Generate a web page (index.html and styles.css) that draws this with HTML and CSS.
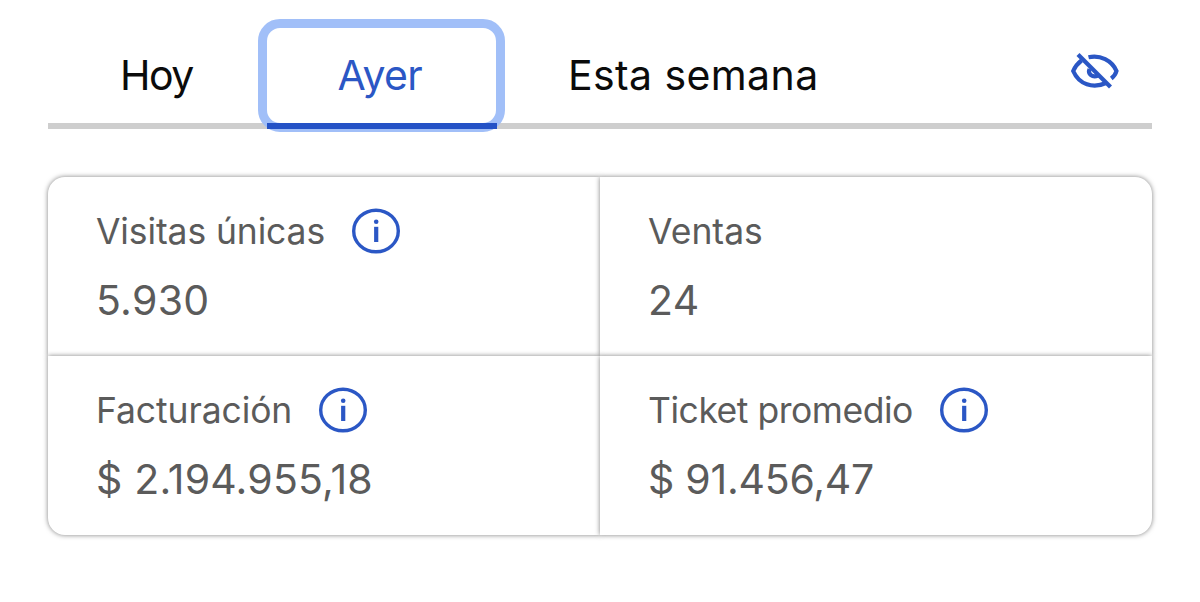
FILE: index.html
```html
<!DOCTYPE html>
<html lang="es">
<head>
<meta charset="utf-8">
<title>Resumen</title>
<link rel="stylesheet" href="styles.css">
</head>
<body>
<svg width="0" height="0" class="defs">
  <symbol id="info" viewBox="0 0 48 46">
    <ellipse cx="24" cy="23" rx="22.3" ry="20.8" fill="none" stroke="currentColor" stroke-width="3.4"/>
    <circle cx="24.2" cy="13.8" r="2.3" fill="currentColor"/>
    <path d="M24.2 18.8V34" stroke="currentColor" stroke-width="4.2"/>
  </symbol>
</svg>
<main class="page">
  <nav class="tabs">
    <a class="tab tab-today"><span class="t-today">Hoy</span></a>
    <a class="tab tab-active"><span class="t-yesterday">Ayer</span></a>
    <a class="tab tab-week"><span class="t-week">Esta semana</span></a>
    <svg class="eye" viewBox="0 0 50 38" fill="none" stroke="currentColor" stroke-width="4.2">
      <path d="M18.500 5.300C30 2.500 42 8.500 46.500 19C45.700 22 43.800 24.500 41.300 26.500"/>
      <path d="M11.500 8.500C7.500 11.500 5 15 3.200 19C9 32.500 23 37 36 31"/>
      <path d="M19.500 17C17.500 22 22.500 26 28 23.500"/>
      <path d="M8 2.500L40.500 35"/>
    </svg>
  </nav>
  <section class="cards">
    <article class="card card-tl">
      <div class="label"><span class="l-visits">Visitas únicas</span><svg class="info"><use href="#info"/></svg></div>
      <div class="value v-visits">5.930</div>
    </article>
    <article class="card card-tr">
      <div class="label"><span class="l-sales">Ventas</span></div>
      <div class="value v-sales">24</div>
    </article>
    <article class="card card-bl">
      <div class="label"><span class="l-billing">Facturación</span><svg class="info"><use href="#info"/></svg></div>
      <div class="value v-billing">$ 2.194.955,18</div>
    </article>
    <article class="card card-br">
      <div class="label"><span class="l-ticket">Ticket promedio</span><svg class="info"><use href="#info"/></svg></div>
      <div class="value v-ticket">$ 91.456,47</div>
    </article>
  </section>
</main>
</body>
</html>
```
FILE: styles.css
```css
*, *::before, *::after { box-sizing: border-box; }
body { margin: 0; background: #fff; font-family: Inter, "Liberation Sans", sans-serif; color: #5b5b5b; }
.defs { display: block; }
.page { min-height: 602px; padding: 27px 48px 0; }
.tabs { display: flex; height: 102px; border-bottom: 6px solid #cecece; color: #0b0b0b; font-size: 41px; line-height: 50px; }
.tab { padding: 23px 0 0 72px; height: 102px; white-space: nowrap; }
.tab-today { width: 218.5px; }
.tab-active { width: 230.5px; position: relative; color: #2b57c5; }
.tab-active::before { content: ""; position: absolute; left: -8.5px; top: -8px; width: 247px; height: 113px; border: 9px solid #a1bff8; border-radius: 22px; }
.tab-active::after { content: ""; position: absolute; left: 0; right: 0; bottom: 0; height: 6px; background: #2452c6; }
.t-today { letter-spacing: -1.5px; }
.t-yesterday { letter-spacing: -.6px; margin-left: -1px; }
.t-week { letter-spacing: .4px; margin-left: -1px; }
.eye { width: 50px; height: 38px; margin: 25px 32px 0 auto; color: #2b57c5; }
.cards { display: grid; grid-template-columns: 552px 552px; grid-template-rows: 179px 179px; margin-top: 48px; }
.card { background: #fff; padding: 31px 0 0 48px; box-shadow: 0 0 5px rgba(0,0,0,.5); }
.card-tl { border-top-left-radius: 17px; }
.card-tr { border-top-right-radius: 17px; }
.card-bl { border-bottom-left-radius: 17px; }
.card-br { border-bottom-right-radius: 17px; }
.label { display: flex; align-items: center; justify-content: flex-start; gap: 27px; height: 46px; font-size: 35.500px; white-space: nowrap; }
.l-visits { letter-spacing: -.12px; }
.l-billing { letter-spacing: -.1px; }
.l-ticket { letter-spacing: -.47px; }
.info { width: 48px; height: 46px; color: #2b57c5; flex: none; }
.value { margin-top: 21px; font-size: 41px; line-height: 50px; white-space: nowrap; }
.v-visits, .v-sales { letter-spacing: .3px; }
.v-billing { letter-spacing: .18px; }
.v-ticket { letter-spacing: -.25px; }
```
